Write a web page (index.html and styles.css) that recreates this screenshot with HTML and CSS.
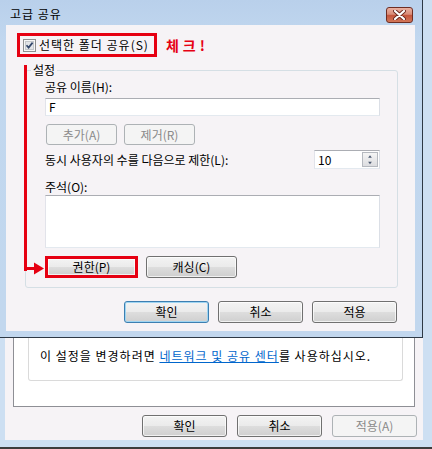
FILE: index.html
```html
<!DOCTYPE html>
<html>
<head>
    <meta charset="utf-8">
    <title>고급 공유</title>
    <link rel="stylesheet" href="styles.css">
</head>
<body>
    <!-- background window: folder properties -->
    <div class="bg-window">
        <div class="bg-client">
            <div class="bg-panel">
                <div class="bg-note">
                    <p>이 설정을 변경하려면 <a href="#">네트워크 및 공유 센터</a>를 사용하십시오.</p>
                </div>
            </div>
            <div class="button-row bg-buttons">
                <button class="btn">확인</button>
                <button class="btn">취소</button>
                <button class="btn" disabled>적용(A)</button>
            </div>
        </div>
    </div>

    <!-- front dialog -->
    <div class="dialog">
        <div class="title-bar">
            <span class="title">고급 공유</span>
            <div class="close-btn">
                <svg width="13" height="10" viewBox="0 0 13 10">
                    <path d="M2 1 L11 9 M11 1 L2 9" stroke="#6a2a20" stroke-width="4" stroke-linecap="round"/>
                    <path d="M2 1 L11 9 M11 1 L2 9" stroke="#ffffff" stroke-width="2.2" stroke-linecap="round"/>
                </svg>
            </div>
        </div>

        <div class="client">
            <div class="check-row">
                <label class="marked-box">
                    <svg class="checkbox" width="13" height="13" viewBox="0 0 13 13">
                        <rect x="0.5" y="0.5" width="12" height="12" fill="#f6f6f6" stroke="#8e8f8f"/>
                        <rect x="2.5" y="2.5" width="8" height="8" fill="#e2e4e7" stroke="#c3c6ca"/>
                        <path d="M3.5 6.2 L5.6 8.6 L9.6 3.6" stroke="#33476b" stroke-width="1.7" fill="none"/>
                    </svg>
                    <span class="check-text">선택한 폴더 공유(S)</span>
                </label>
                <span class="check-note">체크!</span>
            </div>

            <div class="group">
                <div class="group-title">설정</div>
                <div class="field-label">공유 이름(H):</div>
                <div class="text-input">F</div>
                <div class="btn-pair">
                    <button class="btn small" disabled>추가(A)</button>
                    <button class="btn small" disabled>제거(R)</button>
                </div>
                <div class="limit-row">
                    <span>동시 사용자의 수를 다음으로 제한(L):</span>
                    <div class="spin-input">
                        <span>10</span>
                        <div class="spin">
                            <svg width="14" height="7" viewBox="0 0 14 7"><path d="M5 5 L7 2.5 L9 5 Z" fill="#4b5a70"/></svg>
                            <svg width="14" height="7" viewBox="0 0 14 7"><path d="M5 2 L7 4.5 L9 2 Z" fill="#4b5a70"/></svg>
                        </div>
                    </div>
                </div>
                <div class="field-label note-label">주석(O):</div>
                <div class="note-area"></div>
                <div class="perm-row">
                    <button class="btn perm marked">권한(P)</button>
                    <button class="btn perm">캐싱(C)</button>
                </div>
            </div>

            <div class="button-row dialog-buttons">
                <button class="btn default">확인</button>
                <button class="btn">취소</button>
                <button class="btn">적용</button>
            </div>
        </div>
    </div>

    <!-- red annotation arrow -->
    <svg class="annot" width="432" height="449" viewBox="0 0 432 449">
        <rect x="24" y="65" width="3" height="206" fill="#e60012"/>
        <rect x="24" y="267" width="12" height="3" fill="#e60012"/>
        <polygon points="34,262.5 44,268.5 34,274.5" fill="#e60012"/>
    </svg>
</body>
</html>
```

FILE: styles.css
```css
* {
    margin: 0;
    padding: 0;
    box-sizing: border-box;
}

body {
    width: 432px;
    height: 449px;
    overflow: hidden;
    position: relative;
    font-family: "Noto Sans CJK KR", "Noto Sans", sans-serif;
    font-size: 12px;
    line-height: 14px;
    color: #000;
    background: #cddff2;
}

/* background window */
.bg-window {
    height: 449px;
    padding: 0 9px 7px 5px;
    background: #cddff2;
    border-bottom: 2px solid #3c3c3c;
}

.bg-client {
    height: 440px;
    background: #f6f3f6;
    display: flex;
    flex-direction: column;
}

.bg-panel {
    width: 402px;
    height: 407px;
    margin-left: 8px;
    border: 1px solid #8e8f95;
    background: #fff;
    display: flex;
    flex-direction: column;
    justify-content: flex-end;
    padding: 0 11px 25px 14px;
}

.bg-note {
    height: 120px;
    border: 1px solid #dadada;
    border-top: none;
    border-radius: 0 0 3px 3px;
    display: flex;
    align-items: flex-end;
    padding: 0 0 17px 11px;
    letter-spacing: 1px;
}

.bg-note a {
    color: #0066cc;
    text-decoration: underline;
}

.button-row {
    display: flex;
    justify-content: flex-end;
}

.bg-buttons {
    margin-top: 8px;
    padding-right: 6px;
    gap: 10px;
}

/* buttons */
.btn {
    width: 85px;
    height: 22px;
    font-family: inherit;
    font-size: 12px;
    line-height: 14px;
    color: #000;
    border: 1px solid #707070;
    border-radius: 3px;
    background: linear-gradient(#f3f3f3 0%, #ebebeb 48%, #dddddd 52%, #cfcfcf 100%);
    box-shadow: inset 0 0 0 1px rgba(255,255,255,0.7);
}

.btn:disabled {
    color: #8a8a8a;
    border-color: #adb2b5;
    background: #f4f4f4;
    box-shadow: none;
}

.btn.default {
    border-color: #3c7fb1;
    box-shadow: inset 0 0 0 1px #9fd5f2;
}

.btn.small {
    width: 71px;
    height: 21px;
}

.btn.perm {
    width: 91px;
}

.btn.marked {
    width: 93px;
    border: 3px solid #e60012;
    border-radius: 0;
}

/* front dialog */
.dialog {
    position: absolute;
    left: -1px;
    top: -1px;
    width: 424px;
    height: 339px;
    border: 1px solid #2e3945;
    background: linear-gradient(#b9d0eb, #c1d7ef 40px, #c2d7ee);
    display: flex;
    flex-direction: column;
}

.title-bar {
    height: 25px;
    flex: none;
    display: flex;
    align-items: flex-start;
    justify-content: space-between;
    padding: 7px 9px 0 10px;
}

.title {
    letter-spacing: 1px;
}

.close-btn {
    width: 27px;
    height: 16px;
    border: 1px solid #6e2d22;
    border-radius: 3px;
    background: linear-gradient(#eab0a0 0%, #d98c78 45%, #c4553c 52%, #d27658 100%);
    display: flex;
    align-items: center;
    justify-content: center;
}

.client {
    flex: none;
    height: 306px;
    margin: 0 7px 0 6px;
    background: #f6f3f6;
}

.check-row {
    display: flex;
    align-items: center;
    margin: 8px 0 0 11px;
}

.marked-box {
    display: flex;
    align-items: center;
    gap: 3px;
    height: 24px;
    border: 3px solid #e60012;
    padding: 0 5px 0 3px;
}

.check-text {
    letter-spacing: 1px;
}

.check-note {
    margin-left: 9px;
    color: #e60012;
    font-weight: bold;
    font-size: 14px;
    letter-spacing: 4px;
}

.group {
    width: 373px;
    margin: 13px 0 0 19px;
    border: 1px solid #d5dfe5;
    border-radius: 3px;
    padding: 0 17px 9px 19px;
}

.group-title {
    width: max-content;
    margin: -8px 0 0 -14px;
    padding: 0 2px;
    background: #f6f3f6;
}

.field-label {
    margin-top: 3px;
}

.text-input {
    margin-top: 4px;
    height: 18px;
    border: 1px solid;
    border-color: #abadb3 #dbdfe6 #e3e9ef #e2e3ea;
    background: #fff;
    padding: 0 3px;
    line-height: 16px;
}

.btn-pair {
    margin-top: 8px;
    padding-left: 1px;
    display: flex;
    gap: 7px;
}

.limit-row {
    margin-top: 5px;
    display: flex;
    align-items: center;
    justify-content: space-between;
}

.spin-input {
    width: 66px;
    height: 19px;
    border: 1px solid;
    border-color: #abadb3 #dbdfe6 #e3e9ef #e2e3ea;
    background: #fff;
    display: flex;
    align-items: center;
    justify-content: space-between;
    padding: 0 1px 0 3px;
}

.spin {
    width: 16px;
    height: 15px;
    border: 1px solid #b5b9bf;
    background: linear-gradient(#f5f5f5, #dcdde0);
    display: flex;
    flex-direction: column;
}

.spin svg {
    display: block;
}

.note-label {
    margin-top: 11px;
}

.note-area {
    margin-top: 1px;
    height: 53px;
    border: 1px solid;
    border-color: #abadb3 #dbdfe6 #e3e9ef #e2e3ea;
    background: #fff;
}

.perm-row {
    margin-top: 8px;
    display: flex;
    gap: 8px;
}

.dialog-buttons {
    margin-top: 13px;
    padding-right: 18px;
    gap: 9px;
}

/* annotation overlay */
.annot {
    position: absolute;
    left: 0;
    top: 0;
    pointer-events: none;
}
```
